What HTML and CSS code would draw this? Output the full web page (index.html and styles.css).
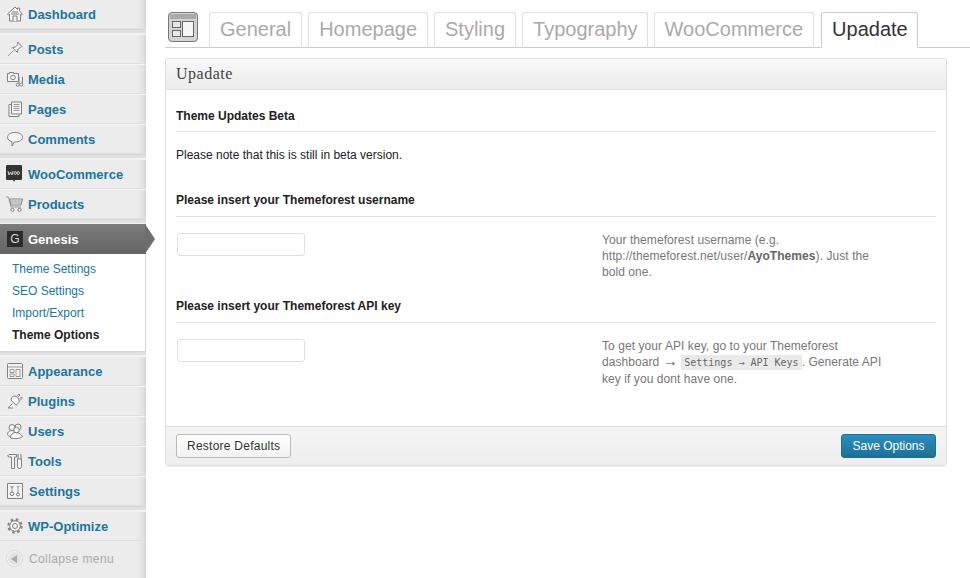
FILE: index.html
```html
<!DOCTYPE html>
<html lang="en">
<head>
<meta charset="utf-8">
<title>Theme Options</title>
<link rel="stylesheet" href="styles.css">
</head>
<body>
<div class="page">
  <nav class="sidebar">
    <a class="item"><svg class="ic" viewBox="0 0 16 16"><path d="M.5 8 8 1l2.500 2.300V2h2v3.200L15.500 8l-1 1-1-.8V15h-11V8.200l-1 .8z"/><path d="M6 15v-5h4v5M4 8h8M5 6h6"/></svg>Dashboard</a>
    <div class="sep"></div>
    <a class="item"><svg class="ic" viewBox="0 0 16 16"><path d="M10.500 1l4.500 4.500-1.500.5-2.500 2.500-.5 3-5-5 3-.5L11 3.500z"/><path class="thin" d="M6.500 9.500 1 15"/></svg>Posts</a>
    <a class="item"><svg class="ic" viewBox="0 0 16 16"><path d="M.5 2.500h2v-1h4v1h5v8H.5z"/><circle cx="6" cy="6.500" r="2.300"/><path d="M12 6v7.500M15.500 6v7"/><circle cx="10.800" cy="13.800" r="1.500"/><circle cx="14.300" cy="13.500" r="1.500"/></svg>Media</a>
    <a class="item"><svg class="ic" viewBox="0 0 16 16"><path d="M2 3.500h10V15.500H2z"/><path d="M4.500 1h10v12h-10z"/><path class="thin" d="M6.500 3.500h6M6.500 5.500h6M6.500 7.500h6M6.500 9.500h6"/></svg>Pages</a>
    <a class="item"><svg class="ic" viewBox="0 0 16 16"><path d="M8 1.500c4.500 0 7.500 2 7.500 4.800S12.500 11 8 11h-.7L5 15V10.700C2.300 10 .5 8.500.5 6.300.5 3.500 3.500 1.500 8 1.500z"/></svg>Comments</a>
    <div class="sep"></div>
    <a class="item"><svg class="woo" viewBox="0 0 16 18"><path class="woo-bg" d="M1 0h14a1 1 0 0 1 1 1v13a1 1 0 0 1-1 1H9l-1 2-1-2H1a1 1 0 0 1-1-1V1a1 1 0 0 1 1-1z"/><path class="woo-mark" d="M2 6l1 4 1.500-3L6 10l1-4M8 8a1.200 1.500 0 1 0 2.400 0a1.200 1.500 0 1 0-2.400 0M11 8a1.200 1.500 0 1 0 2.400 0a1.200 1.500 0 1 0-2.400 0"/></svg>WooCommerce</a>
    <a class="item"><svg class="ic" viewBox="0 0 16 16"><path class="thin" d="M-1 1h2.500l2.500 10h10"/><path d="M2.500 3h13l-1.500 6H4z"/><path class="thin" d="M3.500 5h11M4 7h10"/><circle cx="5.500" cy="13.800" r="1.600"/><circle cx="12.500" cy="13.800" r="1.600"/></svg>Products</a>
    <div class="sep"></div>
    <a class="item current"><span class="gbox">G</span>Genesis</a>
    <ul class="submenu">
      <li>Theme Settings</li>
      <li>SEO Settings</li>
      <li>Import/Export</li>
      <li class="on">Theme Options</li>
    </ul>
    <div class="sep"></div>
    <a class="item"><svg class="ic" viewBox="0 0 16 16"><path d="M1.500.5h13a1 1 0 0 1 1 1v13a1 1 0 0 1-1 1h-13a1 1 0 0 1-1-1v-13a1 1 0 0 1 1-1z"/><path class="thin" d="M.5 4h15M3 6.500h4v3H3zM3 11h4v2.500H3zM9 6.500h4v7H9z"/></svg>Appearance</a>
    <a class="item"><svg class="ic" viewBox="0 0 16 16"><path d="M4 7l5 5 2-1.500c1.500-1.500 1.500-3 .8-4.500l-2.800-2.800C7.500 3 6 3 4.800 4.500z"/><path d="M9.500 3.500 12 1l1 1-2.500 2.500M12 6.500 14.500 4l1 1L13 7.500M5.500 10.500 1 15h5"/></svg>Plugins</a>
    <a class="item"><svg class="ic" viewBox="0 0 16 16"><circle cx="5" cy="4.500" r="3"/><circle cx="11" cy="4" r="3"/><path d="M.5 11.500c0-2.500 2-4 4.500-4 1 0 2 .3 2.500 1l-1 5C3 13.500.5 13 .5 11.500z"/><path d="M3.500 15c0-3 2-5.500 5-5.500s5.500 1.500 7 4c-3 2.500-8 2.500-12 1.500z"/><circle cx="9.500" cy="7" r="2.800"/></svg>Users</a>
    <a class="item"><svg class="ic" viewBox="0 0 16 16"><path d="M.5 3 2 1.500h7.500V4h-2v11.500h-3V4H2zM11 1v5M14 1v5M10.500 6h4v7.500a2 2 0 0 1-4 0z"/></svg>Tools</a>
    <a class="item"><svg class="ic" viewBox="0 0 16 16"><path d="M.5.500h15v15H.5z"/><path class="thin" d="M5 3v2M11 3v1M3.500 3 5 5l1.500-2M9.500 3 11 4.500 12.500 3M5 5v4M11 4.500V10"/><circle cx="5" cy="10.800" r="1.800"/><circle cx="11" cy="11.500" r="1.500"/></svg><span class="shift">Settings</span></a>
    <div class="sep"></div>
    <a class="item"><svg class="ic" viewBox="0 0 16 16"><circle class="teeth" cx="8" cy="8" r="6.500"/><circle cx="8" cy="8" r="5.300"/><circle cx="8" cy="8" r="2.500"/></svg>WP-Optimize</a>
    <div class="collapse"><span class="cbtn"><span class="tri"></span></span>Collapse menu</div>
  </nav>

  <main class="main">
    <div class="tabs">
      <svg class="logo" viewBox="0 0 30 30"><rect x=".5" y=".5" width="29" height="29" rx="3.500" class="logo-frame"/><path class="logo-top" d="M2 2h26v5H2z"/><rect x="4.500" y="9.500" width="8" height="6" class="logo-cell"/><rect x="4.500" y="18.500" width="8" height="6" class="logo-cell"/><rect x="14.500" y="9.500" width="11" height="15" class="logo-main"/></svg>
      <a class="tab">General</a>
      <a class="tab">Homepage</a>
      <a class="tab">Styling</a>
      <a class="tab tight">Typography</a>
      <a class="tab">WooCommerce</a>
      <a class="tab active tight">Upadate</a>
    </div>

    <section class="panel">
      <header class="panel-head">Upadate</header>
      <div class="panel-body">
        <h3 class="first">Theme Updates Beta</h3>
        <p class="note">Please note that this is still in beta version.</p>
        <h3>Please insert your Themeforest username</h3>
        <div class="field">
          <input class="input" type="text">
          <p class="help">Your themeforest username (e.g. http://themeforest.net/user/<b>AyoThemes</b>). Just the bold one.</p>
        </div>
        <h3>Please insert your Themeforest API key</h3>
        <div class="field">
          <input class="input" type="text">
          <p class="help">To get your API key, go to your Themeforest dashboard <span class="arrow">→</span> <code>Settings → API Keys</code>. Generate API key if you dont have one.</p>
        </div>
      </div>
      <footer class="panel-foot">
        <button class="btn restore">Restore Defaults</button>
        <button class="btn primary">Save Options</button>
      </footer>
    </section>
  </main>
</div>
</body>
</html>
```
FILE: styles.css
```css
* { box-sizing: border-box; }
html, body { margin: 0; height: 100%; overflow: hidden; }
body { background: #fff; font-family: "Liberation Sans", Arial, sans-serif; font-size: 12px; color: #333; }
.page { display: flex; height: 578px; }

/* sidebar */
.sidebar { width: 146px; flex: none; height: 579px; margin-top: -1px; background: linear-gradient(to right, #ececec 0, #ececec 137px, #e2e2e2 143px, #d4d4d4 146px); display: flex; flex-direction: column; }
.item { height: 30px; flex: none; position: relative; display: flex; align-items: center; gap: 5px; padding-left: 7px; font-size: 13px; font-weight: bold; color: #21759b; border-top: 1px solid #f4f4f4; border-bottom: 1px solid #dfdfdf; }
.sep { height: 5px; flex: none; background: #e0e0e0; border-top: 1px solid #d6d6d6; border-bottom: 1px solid #f2f2f2; }
.ic { width: 16px; height: 16px; flex: none; fill: #f4f4f4; stroke: #808080; stroke-width: 1; overflow: visible; }
.thin { fill: none; stroke: #999; }
.teeth { fill: none; stroke: #888; stroke-width: 2.400; stroke-dasharray: 2.550 2.550; }
.woo { width: 16px; height: 18px; flex: none; margin-left: -1px; margin-right: 1px; }
.woo-bg { fill: #333; }
.woo-mark { fill: none; stroke: #ddd; stroke-width: .9; }
.shift { margin-left: 1px; }

.current { background: linear-gradient(to bottom, #7c7c7c, #636363); color: #fff; border: 0; }
.current::after { content: ""; position: absolute; left: 145px; top: 0; border-left: 10px solid #6e6e6e; border-top: 15px solid transparent; border-bottom: 15px solid transparent; }
.gbox { width: 16px; height: 16px; flex: none; background: #2b2b2b; color: #ddd; font-weight: normal; font-size: 12px; display: flex; align-items: center; justify-content: center; }

.submenu { list-style: none; margin: 0; padding: 4px 0 5px; width: 145px; flex: none; height: 97px; background: #fff; }
.submenu li { height: 22px; line-height: 22px; padding-left: 12px; font-size: 12px; color: #21759b; }
.submenu .on { font-weight: bold; color: #222; }

.collapse { flex: 1; display: flex; align-items: center; align-self: flex-start; gap: 6px; padding: 0 0 2px 6px; height: 37px; font-size: 12px; letter-spacing: .38px; color: #aaa; }
.cbtn { width: 17px; height: 17px; border-radius: 50%; background: #e2e2e2; border: 1px solid #dcdcdc; box-shadow: inset 0 0 0 1px #f6f6f6; display: flex; align-items: center; justify-content: center; }
.tri { border-right: 6px solid #aaa; border-top: 4px solid transparent; border-bottom: 4px solid transparent; margin-left: -2px; }

/* main */
.main { flex: 1; min-width: 0; padding: 12px 0 0 19px; }
.tabs { display: flex; align-items: flex-end; height: 36px; border-bottom: 1px solid #ccc; }
.logo { width: 30px; height: 30px; margin: 0 11px 5px 3px; flex: none; }
.logo-frame { fill: #d4d4d4; stroke: #777; }
.logo-top { fill: #aaa; }
.logo-cell { fill: #e8e8e8; stroke: #666; }
.logo-main { fill: #f6f6f6; stroke: #666; }
.tab { height: 36px; margin-bottom: -1px; margin-right: 6px; padding: 0 10px; border: 1px solid #dfdfdf; border-bottom: 1px solid #ccc; border-radius: 3px 3px 0 0; font-size: 20px; line-height: 32px; color: #aaa; background: #fff; }
.tab.tight { padding-right: 9px; }
.tab.active { color: #333; border-color: #ccc; border-bottom-color: #fff; margin-left: 1px; margin-right: 0; }

.panel { width: 782px; height: 408px; margin-top: 10px; display: flex; flex-direction: column; border: 1px solid #dfdfdf; border-radius: 3px; box-shadow: 0 1px 1px #eee; }
.panel-head { height: 31px; flex: none; padding: 0 10px; font-family: "Liberation Serif", serif; font-size: 16px; line-height: 30px; letter-spacing: .5px; color: #444; background: linear-gradient(to bottom, #f8f8f8, #ececec); border-bottom: 1px solid #dfdfdf; }
.panel-body { flex: 1; padding: 0 10px; }
h3 { margin: 0; height: 27px; padding-top: 2px; font-size: 12px; line-height: 16px; font-weight: bold; color: #222; border-bottom: 1px solid #dfdfdf; }
h3.first { margin-top: 16px; height: 26px; }
.note { margin: 15px 0 27px; font-size: 12px; line-height: 16px; color: #222; }
.field { display: grid; grid-template-columns: 425px 285px; padding: 16px 0 0 1px; min-height: 79px; }
.input { width: 128px; height: 23px; margin: 0; padding: 0; border: 1px solid #dfdfdf; border-radius: 3px; background: #fff; }
.help { margin: -1px 0 0; font-size: 12px; line-height: 16px; letter-spacing: .07px; color: #777; }
.help b { color: #666; }
.arrow { font-size: 15px; line-height: 12px; color: #555; }
code { font-family: "DejaVu Sans Mono", monospace; font-size: 10px; line-height: 16px; letter-spacing: 0; padding: 2px 3px; background: #eaeaea; color: #666; }

.panel-foot { height: 39px; flex: none; padding: 7px 10px 0; display: flex; justify-content: space-between; align-items: flex-start; background: linear-gradient(to bottom, #f5f5f5, #eee); border-top: 1px solid #dfdfdf; }
.btn { height: 24px; padding: 0 10px; font-family: "Liberation Sans", Arial, sans-serif; font-size: 12px; color: #333; border: 1px solid #bbb; border-radius: 3px; background: linear-gradient(to bottom, #fff, #f2f2f2); }
.restore { letter-spacing: .25px; }
.btn.primary { width: 95px; padding: 0; color: #fff; border-color: #1f6f93; background: linear-gradient(to bottom, #2a8fbd, #1e6f98); }
```
